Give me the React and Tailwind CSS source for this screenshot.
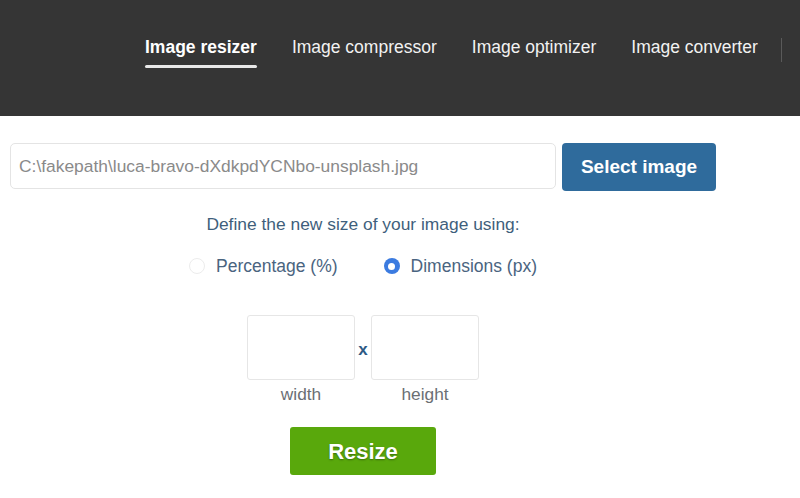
export default function App() {
  const navItems = ["Image resizer", "Image compressor", "Image optimizer", "Image converter"];

  return (
    <div className="w-[800px] h-[498px] overflow-hidden bg-white font-['Liberation_Sans',Arial,sans-serif]">
      {/* top bar */}
      <header className="h-[116px] bg-[#353535] flex items-start pl-[145px] pt-[36px]">
        <nav className="flex items-start">
          {navItems.map((item, i) => (
            <div key={item} className="mr-[35px]">
              <span
                className={
                  i === 0
                    ? "block text-[17.5px] font-bold text-white leading-[22px]"
                    : "block text-[17.5px] text-[#f2f2f2] leading-[22px]"
                }
              >
                {item}
              </span>
              {i === 0 && <div className="mt-[7px] h-[3px] bg-[#e8e8e8] rounded-sm" />}
            </div>
          ))}
          <div className="ml-[-12px] mt-[2px] w-px h-[24px] bg-[#5a5a5a]" />
        </nav>
      </header>

      {/* form */}
      <main className="w-[716px] pl-[10px] pt-[27px] flex flex-col">
        <div className="flex items-start gap-[6px]">
          <div className="w-[546px] h-[46px] border border-[#e4e4e4] rounded-[5px] flex items-center px-[8px] text-[17.4px] text-[#8a8a8a]">
            C:\fakepath\luca-bravo-dXdkpdYCNbo-unsplash.jpg
          </div>
          <button className="w-[154px] h-[48px] bg-[#2f6b9c] rounded-[4px] text-white text-[19px] font-bold">
            Select image
          </button>
        </div>

        <p className="mt-[20px] text-center text-[17.4px] text-[#3f5f7c]">
          Define the new size of your image using:
        </p>

        {/* radios */}
        <div className="mt-[16px] flex items-center justify-center gap-[46px] text-[17.5px] text-[#4a6480]">
          <label className="flex items-center gap-[11px]">
            <span className="w-[16px] h-[16px] rounded-full border border-[#ececec] bg-white" />
            Percentage (%)
          </label>
          <label className="flex items-center gap-[11px]">
            <span className="w-[16px] h-[16px] rounded-full bg-[#3b7be0] flex items-center justify-center">
              <span className="w-[7px] h-[7px] rounded-full bg-white" />
            </span>
            Dimensions (px)
          </label>
        </div>

        {/* width x height */}
        <div className="mt-[36px] flex justify-center items-start gap-[3px]">
          <div className="flex flex-col items-center">
            <div className="w-[108px] h-[65px] border border-[#e6e6e6] rounded-[3px]" />
            <span className="mt-[2px] text-[17.3px] text-[#6b6f74]">width</span>
          </div>
          <span className="mt-[22px] w-[10px] text-center text-[17px] font-bold text-[#2e5a85]">x</span>
          <div className="flex flex-col items-center">
            <div className="w-[108px] h-[65px] border border-[#e6e6e6] rounded-[3px]" />
            <span className="mt-[2px] text-[17.3px] text-[#6b6f74]">height</span>
          </div>
        </div>

        <div className="mt-[19px] flex justify-center">
          <button className="w-[146px] h-[48px] bg-[#59a80c] rounded-[3px] text-white text-[22px] font-bold [text-shadow:0_1px_2px_rgba(0,0,0,0.35)]">
            Resize
          </button>
        </div>
      </main>
    </div>
  );
}
